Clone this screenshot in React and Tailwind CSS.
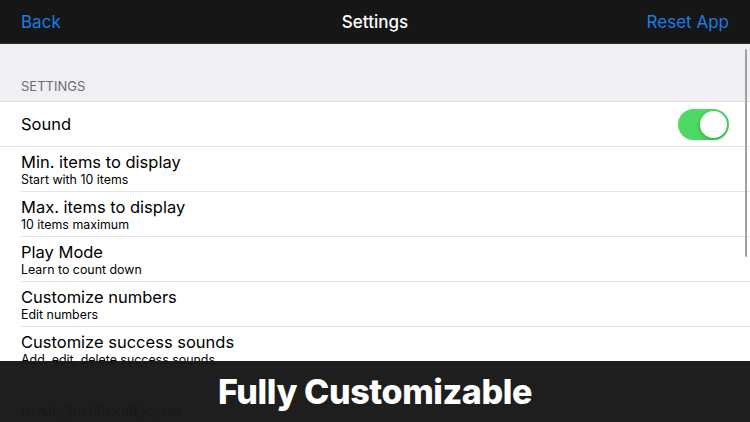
import React, { useState } from 'react';

const rows = [
    { title: 'Min. items to display', sub: 'Start with 10 items' },
    { title: 'Max. items to display', sub: '10 items maximum' },
    { title: 'Play Mode', sub: 'Learn to count down' },
    { title: 'Customize numbers', sub: 'Edit numbers' },
    { title: 'Customize success sounds', sub: 'Add, edit, delete success sounds' },
];

export default function App() {
    const [sound, setSound] = useState(true);

    return (
        <div className="relative w-[750px] h-[422px] overflow-hidden bg-[#efeff4] font-['Inter',sans-serif]">
            <div className="h-[44px] grid grid-cols-3 items-center px-[21px] pt-[2px] bg-[#161616] border-b border-[#2a2a2a]">
                <button className="justify-self-start text-[17px] text-[#1a7de6]">Back</button>
                <div className="text-center text-[17px] font-medium text-white">Settings</div>
                <button className="justify-self-end text-[17px] text-[#1a7de6]">Reset App</button>
            </div>

            <div className="h-[57px] flex items-end px-[21px] pb-[5px]">
                <span className="text-[13px] text-[#6d6d72]">SETTINGS</span>
            </div>

            <div className="bg-white border-t border-[#e0e0e4]">
                <div className="h-[45px] flex items-center justify-between pl-[21px] pr-[21px] border-b border-[#e4e4e8]">
                    <span className="text-[16.5px] text-black">Sound</span>
                    <button
                        onClick={() => setSound(v => !v)}
                        className={`w-[51px] h-[31px] rounded-full p-[2px] flex ${sound ? 'bg-[#4cd964] justify-end' : 'bg-[#e5e5ea] justify-start'}`}
                    >
                        <span className="w-[27px] h-[27px] rounded-full bg-white shadow-[0_2px_4px_rgba(0,0,0,0.25)]" />
                    </button>
                </div>
                {rows.map(r => (
                    <div key={r.title} className="ml-[21px] h-[45px] flex flex-col justify-center border-b border-[#e4e4e8]">
                        <div className="text-[16.5px] leading-[20px] text-black">{r.title}</div>
                        <div className="text-[12.4px] leading-[15px] text-black">{r.sub}</div>
                    </div>
                ))}
            </div>

            <div className="h-[56px] flex items-end px-[21px] pb-[6px]">
                <span className="text-[13px] text-[#6d6d72]">NUMBERS PROGRESSION</span>
            </div>

            <div className="absolute right-[3px] top-[49px] w-[2px] h-[208px] rounded-full bg-[#a0a0a4]" />

            <div className="absolute left-0 right-0 bottom-0 h-[61px] bg-[#151515]/[0.96] flex items-center justify-center">
                <span className="text-[34px] font-extrabold text-white tracking-[-0.4px]">Fully Customizable</span>
            </div>
        </div>
    );
}
